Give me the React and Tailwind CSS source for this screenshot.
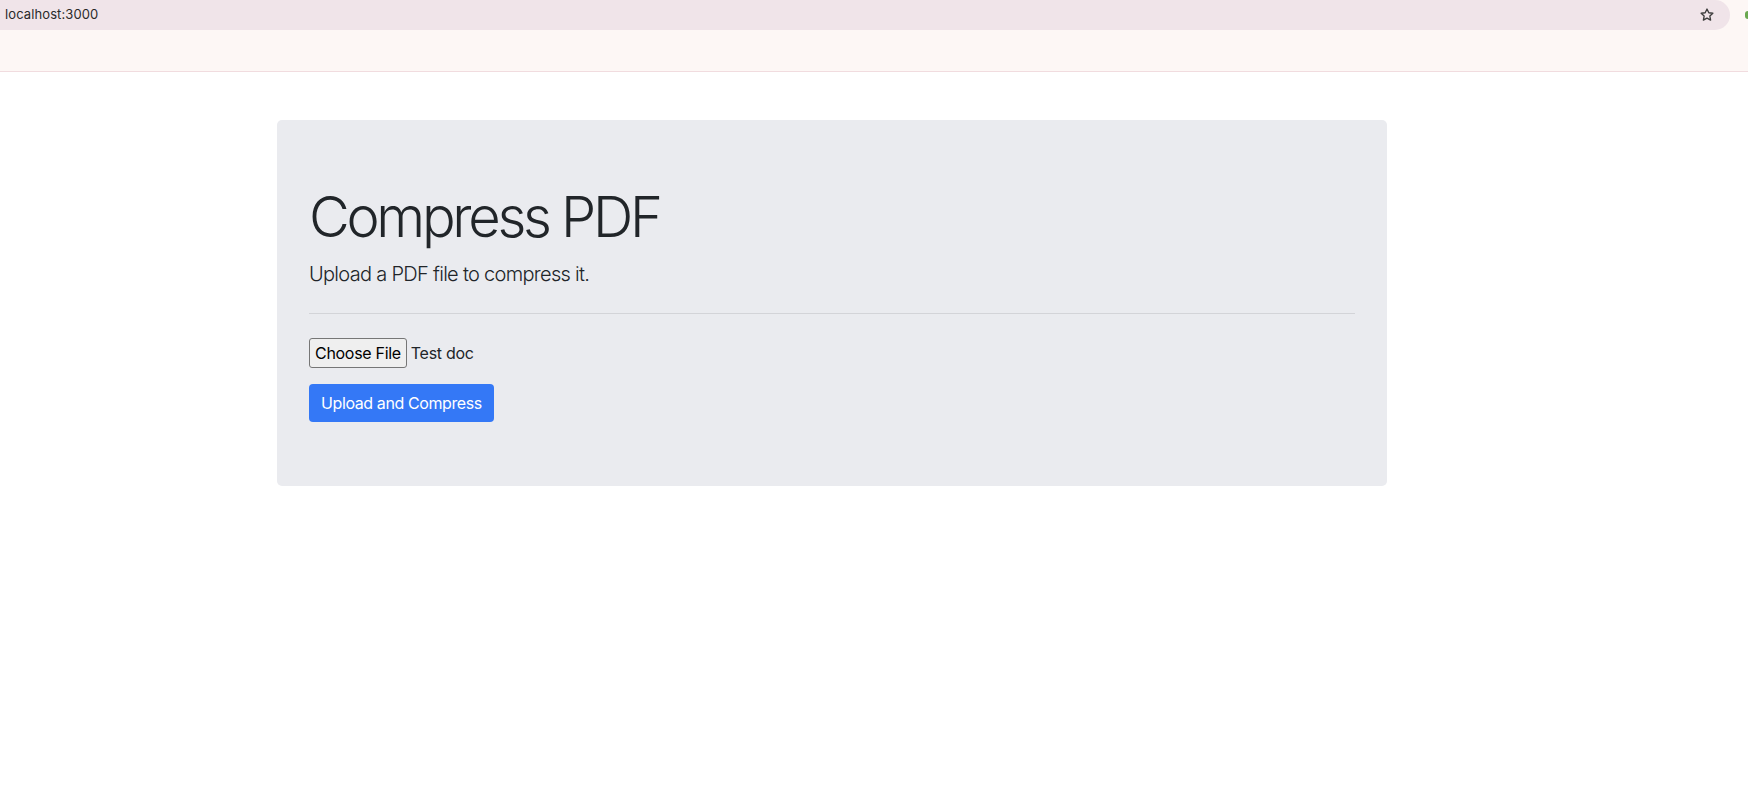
import React from "react";

export default function App() {
  const sys = { fontFamily: "Inter, 'Noto Sans', 'Liberation Sans', sans-serif" };
  return (
    <div className="w-[1748px] h-[786px] bg-white overflow-hidden" style={sys}>
      {/* browser chrome */}
      <div className="flex h-[30px] bg-[#fdf7f5]">
        <div className="flex-1 flex items-center justify-between bg-[#f0e4e9] rounded-r-full pl-[5px] pr-[15px]">
          <span className="text-[13px] text-[#2a2a2a] tracking-[0.1px]">localhost:3000</span>
          <svg width="16" height="16" viewBox="0 0 24 24" fill="none" stroke="#3c3c3c" strokeWidth="2" strokeLinejoin="round">
            <path d="M12 3l2.7 5.6 6.1.8-4.5 4.2 1.1 6.1L12 16.8 6.6 19.7l1.1-6.1L3.2 9.4l6.1-.8z" />
          </svg>
        </div>
        <div className="w-[18px] flex items-center justify-end">
          <div className="w-[3px] h-[8px] bg-[#6aa84f] rounded-l-full" />
        </div>
      </div>
      <div className="h-[42px] bg-[#fdf7f5] border-b border-[#f1dcdf]" />

      {/* page */}
      <div className="pl-[277px] pt-[48px]">
        <div className="w-[1110px] bg-[#eaebef] rounded-[5px] px-8 pt-16 pb-16 text-[#212529]">
          <h1 className="text-[56px] font-light leading-[1.2] mb-2 tracking-[-3.3px]">Compress PDF</h1>
          <p className="text-[20px] font-light leading-[1.5] tracking-[-0.7px]">Upload a PDF file to compress it.</p>
          <hr className="mt-6 mb-6 border-t border-[#d3d4d8]" />
          <div className="flex items-center h-[30px]">
            <button className="h-[30px] px-[5px] bg-[#efefef] border border-[#767676] rounded-[3px] text-[16px] text-black leading-none tracking-[-0.3px]">
              Choose File
            </button>
            <span className="ml-[4px] text-[16px] text-[#212529] tracking-[-0.3px]">Test doc</span>
          </div>
          <div className="mt-4">
            <button className="h-[38px] px-3 bg-[#3478f6] text-white text-[16px] rounded-[4px] leading-none tracking-[-0.4px]">
              Upload and Compress
            </button>
          </div>
        </div>
      </div>
    </div>
  );
}
